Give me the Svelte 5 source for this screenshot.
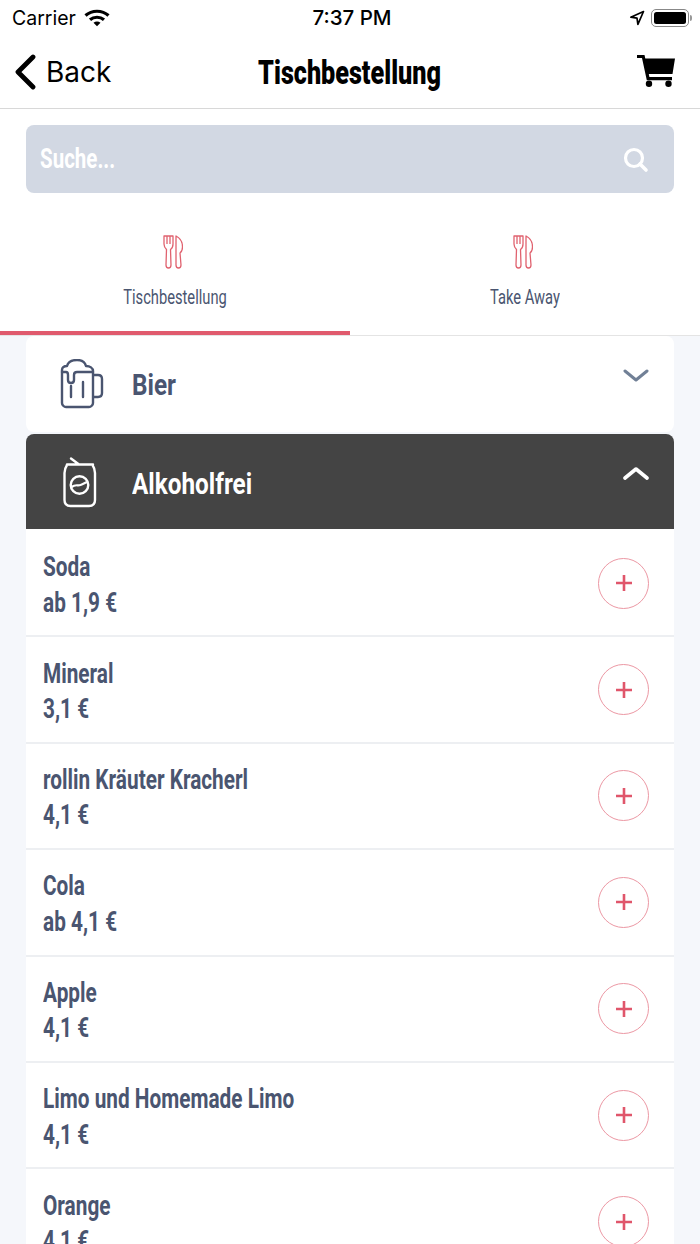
<script>
	const items = [
		{ name: 'Soda', price: 'ab 1,9 €' },
		{ name: 'Mineral', price: '3,1 €' },
		{ name: 'rollin Kräuter Kracherl', price: '4,1 €' },
		{ name: 'Cola', price: 'ab 4,1 €' },
		{ name: 'Apple', price: '4,1 €' },
		{ name: 'Limo und Homemade Limo', price: '4,1 €' },
		{ name: 'Orange', price: '4,1 €' }
	];
	const tabs = ['Tischbestellung', 'Take Away'];
</script>

<div class="screen">
	<div class="status">
		<div class="status-left">
			<span>Carrier</span>
			<svg width="26" height="18" viewBox="0 0 26 18">
				<path d="M1.5 6.5C7.8.8 18.200.8 24.500 6.500" fill="none" stroke="#000" stroke-width="3.200" />
				<path d="M6 10.800c3.900-3.400 10.100-3.400 14 0" fill="none" stroke="#000" stroke-width="3.200" />
				<path d="M9.500 13.700c2-1.500 5-1.500 7 0L13 17.200z" fill="#000" />
			</svg>
		</div>
		<span class="clock">7:37 PM</span>
		<div class="status-right">
			<svg width="16" height="16" viewBox="0 0 16 16">
				<path d="M14.500 1.500 1.800 7.200l6.200.9.900 6.200z" fill="none" stroke="#000" stroke-width="1.700" stroke-linejoin="round" />
			</svg>
			<div class="battery"><div class="battery-fill"></div></div>
			<div class="battery-cap"></div>
		</div>
	</div>

	<nav class="navbar">
		<div class="back">
			<svg width="24" height="36" viewBox="0 0 24 36">
				<path d="M20 3 5 18l15 15" fill="none" stroke="#000" stroke-width="4.800" stroke-linecap="round" stroke-linejoin="round" />
			</svg>
			<span>Back</span>
		</div>
		<h1><span class="narrow mid">Tischbestellung</span></h1>
		<svg class="cart" width="38" height="32" viewBox="0 0 38 32">
			<path d="M0 0h7.500l.8 3.500H38l-2.500 15.500H11.800l.6 3H35v3.200H9.800L5 3H0z" fill="#000" />
			<circle cx="12" cy="28.700" r="3.200" fill="#000" />
			<circle cx="31.500" cy="28.700" r="3.200" fill="#000" />
		</svg>
	</nav>

	<div class="search-wrap">
		<div class="search">
			<span class="narrow">Suche...</span>
			<svg width="26" height="26" viewBox="0 0 26 26">
				<circle cx="11" cy="11" r="8.500" fill="none" stroke="#fff" stroke-width="3.200" />
				<path d="M17 17l6 6" stroke="#fff" stroke-width="3.600" stroke-linecap="round" />
			</svg>
		</div>
	</div>

	<div class="tabs">
		{#each tabs as tab, i}
			<div class="tab" class:active={i === 0}>
				<svg width="20" height="34" viewBox="0 0 20 34">
					<path d="M1 1V9C1 12 2.500 13.500 3.500 14.500L3 30C3 32 4 33 5.500 33S8 32 8 30L7.500 14.500C9 13.500 10 12 10 9V1ZM4 1V9M7 1V9" fill="none" stroke="#e0626f" stroke-width="1.300" stroke-linejoin="round" />
					<path d="M13 1C17 3 19.500 7 19.500 12C19.500 15 18.500 17 17 18L18 30C18 32 17 33 15.500 33S13 32 13 30Z" fill="none" stroke="#e0626f" stroke-width="1.300" stroke-linejoin="round" />
				</svg>
				<span class="narrow mid">{tab}</span>
			</div>
		{/each}
	</div>

	<div class="content">
		<div class="acc acc-closed">
			<svg class="acc-icon" width="44" height="50" viewBox="0 0 44 50">
				<path d="M2 16V11c0-3 2-4 5-4C8 3 12 1 17 1s8 2 9 6c4 0 7 2 7 5V44c0 2-2 4-4 4H6c-2 0-4-2-4-4Z" fill="none" stroke="#4a5570" stroke-width="2.400" stroke-linejoin="round" />
				<path d="M2 13h4q2 0 2 3v5q0 3 3 3t3-3v-5q0-3 3-3H33M11 27v11M23 23v15" fill="none" stroke="#4a5570" stroke-width="2.400" stroke-linecap="round" stroke-linejoin="round" />
				<path d="M33 16h5q4 0 4 4v14q0 4-4 4h-5" fill="none" stroke="#4a5570" stroke-width="2.400" />
			</svg>
			<span class="acc-title narrow">Bier</span>
			<svg class="chev" width="26" height="16" viewBox="0 0 26 16">
				<path d="M2 3l11 9 11-9" fill="none" stroke="#718096" stroke-width="3" stroke-linecap="round" stroke-linejoin="round" />
			</svg>
		</div>
		<div class="acc acc-open">
			<svg class="acc-icon" width="44" height="54" viewBox="0 0 44 54">
				<path d="M7 9.500H33M11 3.500l8 6" fill="none" stroke="#fff" stroke-width="2.400" stroke-linecap="round" />
				<path d="M7 10C5 13 4.500 15 4.500 18V45c0 4 2 6 6 6H29c4 0 6-2 6-6V18c0-3-.5-5-2.500-8" fill="none" stroke="#fff" stroke-width="2.400" />
				<circle cx="19.500" cy="30" r="8.800" fill="none" stroke="#fff" stroke-width="2.400" />
				<path d="M11.500 32c4-3 6-1 9-2s4-2 6.500-3" fill="none" stroke="#fff" stroke-width="2.200" />
			</svg>
			<span class="acc-title narrow">Alkoholfrei</span>
			<svg class="chev" width="26" height="16" viewBox="0 0 26 16">
				<path d="M2 13l11-9 11 9" fill="none" stroke="#fff" stroke-width="3.600" stroke-linecap="round" stroke-linejoin="round" />
			</svg>
		</div>
		<div class="list">
			{#each items as item}
				<div class="row">
					<div class="row-text">
						<div class="narrow">{item.name}</div>
						<div class="narrow">{item.price}</div>
					</div>
					<div class="add">
						<svg width="18" height="18" viewBox="0 0 18 18">
							<path d="M9 1v16M1 9h16" stroke="#e0566b" stroke-width="2.600" />
						</svg>
					</div>
				</div>
			{/each}
		</div>
	</div>
</div>

<style>
	:global(body) {
		margin: 0;
		background: #f5f7fb;
	}
	.screen {
		width: 700px;
		height: 1244px;
		overflow: hidden;
		font-family: Roboto, 'Liberation Sans', sans-serif;
		color: #4a5570;
	}
	/* no condensed family installed, so squeeze the text horizontally */
	.narrow {
		display: block;
		white-space: nowrap;
		transform: scaleX(0.7);
		transform-origin: left center;
	}
	.narrow.mid {
		transform-origin: center;
	}
	.status {
		height: 33px;
		padding: 1px 8px 0 12px;
		background: #fff;
		display: grid;
		grid-template-columns: 1fr auto 1fr;
		align-items: center;
		font-family: Inter, sans-serif;
		font-size: 19.500px;
		color: #000;
	}
	.status-left {
		display: flex;
		align-items: center;
		gap: 8px;
	}
	.clock {
		font-size: 20.500px;
		font-weight: 500;
	}
	.status-right {
		display: flex;
		align-items: center;
		justify-content: flex-end;
	}
	.status-right svg {
		margin-right: 6px;
	}
	.battery {
		width: 38px;
		height: 18px;
		box-sizing: border-box;
		border: 1.500px solid #888;
		border-radius: 5px;
		padding: 2px;
	}
	.battery-fill {
		height: 100%;
		background: #000;
		border-radius: 2.500px;
	}
	.battery-cap {
		width: 2px;
		height: 6px;
		margin-left: 1px;
		background: #999;
		border-radius: 0 2px 2px 0;
	}
	.navbar {
		height: 74px;
		box-sizing: content-box;
		background: #fff;
		border-bottom: 1px solid #d8d8d8;
		display: grid;
		grid-template-columns: 1fr auto 1fr;
		align-items: center;
		padding: 0 25px;
	}
	.back {
		display: flex;
		align-items: center;
		gap: 9px;
		margin-left: -12px;
		padding-top: 1px;
		font-family: Inter, sans-serif;
		font-size: 28px;
		color: #000;
	}
	h1 {
		margin: 0;
		padding-top: 2px;
		font-size: 34px;
		font-weight: 900;
		color: #000;
	}
	h1 .narrow {
		transform: scaleX(0.74);
	}
	.cart {
		justify-self: end;
	}
	.search-wrap {
		background: #fff;
		padding: 16px 26px 0;
	}
	.search {
		height: 68px;
		background: #d2d8e3;
		border-radius: 8px;
		display: flex;
		align-items: center;
		justify-content: space-between;
		padding: 0 25px 0 14px;
		color: #fff;
		font-size: 27px;
		font-weight: 700;
	}
	.search .narrow {
		transform: scaleX(0.76);
	}
	.search svg {
		margin-top: 2px;
	}
	.tabs {
		display: flex;
		background: #fff;
		border-bottom: 1px solid #e4e4e4;
	}
	.tab {
		flex: 1;
		height: 142px;
		display: flex;
		flex-direction: column;
		align-items: center;
		padding-top: 42px;
		box-sizing: border-box;
		gap: 16px;
		font-size: 21px;
	}
	.tab svg {
		margin-right: 4px;
	}
	.tab.active {
		border-bottom: 4px solid #e05a6d;
	}
	.content {
		padding: 0 26px;
	}
	.acc {
		display: flex;
		align-items: center;
		padding: 0 25px 0 34px;
	}
	.acc-closed {
		height: 96px;
		background: #fff;
		border-radius: 8px;
		margin-bottom: 2px;
	}
	.acc-open {
		height: 95px;
		background: #444;
		border-radius: 8px 8px 0 0;
		color: #fff;
	}
	.acc-title {
		margin-left: 28px;
		font-size: 30px;
		font-weight: 700;
		transform: scaleX(0.81);
	}
	.acc-open .acc-title {
		padding-top: 3px;
	}
	.chev {
		margin-left: auto;
		margin-bottom: 16px;
	}
	.acc-open .chev {
		margin-bottom: 17px;
	}
	.list {
		background: #fff;
		padding-top: 2px;
	}
	.row {
		height: 106.400px;
		box-sizing: border-box;
		border-bottom: 2px solid #edeff2;
		display: flex;
		align-items: center;
		justify-content: space-between;
		padding: 0 25px 0 17px;
	}
	.row-text {
		font-size: 27px;
		font-weight: 700;
		line-height: 35.500px;
		padding-top: 5px;
	}
	.row-text .narrow {
		transform: scaleX(0.77);
	}
	.add {
		width: 51px;
		height: 51px;
		flex: none;
		box-sizing: border-box;
		border: 1px solid #ec98a4;
		border-radius: 50%;
		display: flex;
		align-items: center;
		justify-content: center;
	}
</style>
